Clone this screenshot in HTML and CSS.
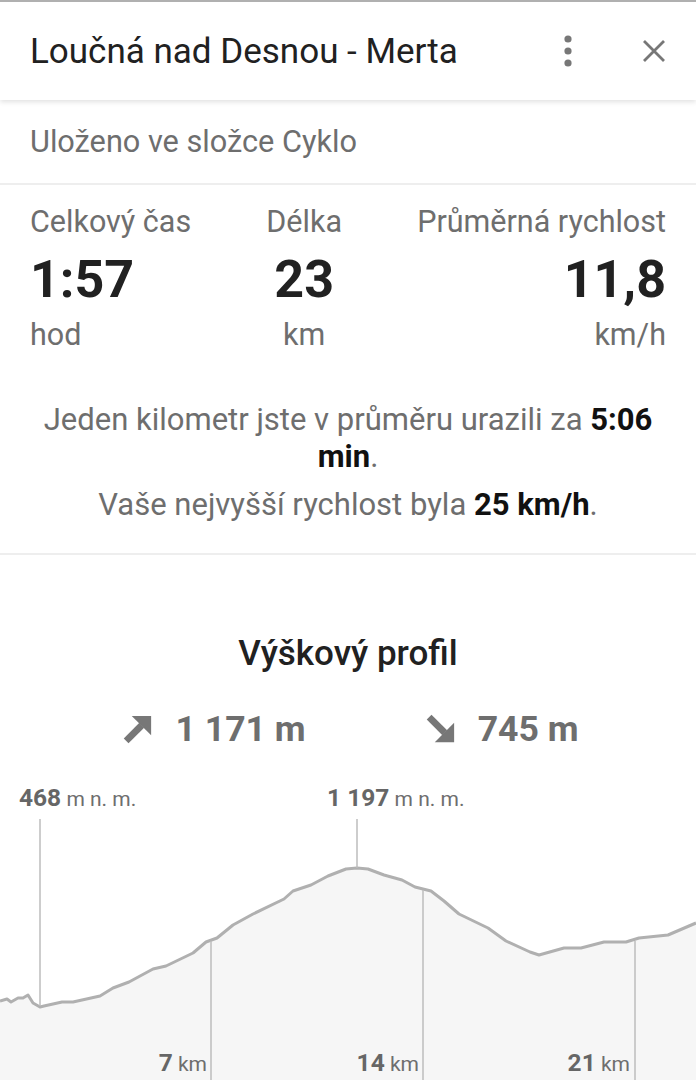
FILE: index.html
```html
<!DOCTYPE html>
<html lang="cs">
<head>
    <meta charset="UTF-8">
    <meta name="viewport" content="width=device-width, initial-scale=1.0">
    <title>Loučná nad Desnou - Merta</title>
    <link rel="stylesheet" href="styles.css">
</head>
<body>

    <!-- horní lišta s názvem trasy -->
    <header class="topbar">
        <h1 class="route-title">Loučná nad Desnou - Merta</h1>
        <div class="topbar-actions">
            <svg class="icon-more" width="14" height="34" viewBox="0 0 14 34">
                <circle cx="7" cy="5" r="3.6"/>
                <circle cx="7" cy="17" r="3.6"/>
                <circle cx="7" cy="29" r="3.6"/>
            </svg>
            <svg class="icon-close" width="26" height="26" viewBox="0 0 26 26">
                <path d="M3 3 L23 23 M23 3 L3 23"/>
            </svg>
        </div>
    </header>

    <div class="folder-row">Uloženo ve složce Cyklo</div>

    <!-- souhrn jízdy -->
    <section class="stats">
        <div class="stat stat-left">
            <div class="stat-label">Celkový čas</div>
            <div class="stat-value">1:57</div>
            <div class="stat-unit">hod</div>
        </div>
        <div class="stat stat-center">
            <div class="stat-label">Délka</div>
            <div class="stat-value">23</div>
            <div class="stat-unit">km</div>
        </div>
        <div class="stat stat-right">
            <div class="stat-label">Průměrná rychlost</div>
            <div class="stat-value">11,8</div>
            <div class="stat-unit">km/h</div>
        </div>
    </section>

    <section class="summary">
        <p class="summary-line">Jeden kilometr jste v průměru urazili za <b>5:06 min</b>.</p>
        <p class="summary-line">Vaše nejvyšší rychlost byla <b>25 km/h</b>.</p>
    </section>

    <!-- výškový profil -->
    <section class="profile">
        <h2 class="profile-title">Výškový profil</h2>
        <div class="climb">
            <div class="climb-item">
                <svg class="climb-icon" width="30" height="30" viewBox="0 0 24 24">
                    <polygon points="7,1.5 22.5,1.5 22.5,17"/>
                    <path d="M2.5 21.5 L15 9"/>
                </svg>
                <span>1 171 m</span>
            </div>
            <div class="climb-item">
                <svg class="climb-icon" width="30" height="30" viewBox="0 0 24 24">
                    <polygon points="7,22.5 22.5,22.5 22.5,7"/>
                    <path d="M2.5 2.5 L15 15"/>
                </svg>
                <span>745 m</span>
            </div>
        </div>

        <div class="chart">
            <svg class="chart-svg" width="696" height="320" viewBox="0 0 696 320">
                <!-- y v grafu = y na stránce - 770 -->
                <polygon class="chart-fill" points="0,230 7,228 11,231 18,227 23,227 28,224 33,232 40,236 44,235 62,231 73,231 100,225 113,217 129,211 153,198 166,195 193,182 206,171 217,167 233,154 253,143 284,128 293,120 311,114 328,105 346,98 357,97 368,98 384,104 402,109 415,116 431,120 444,130 459,143 488,157 506,170 530,181 539,184 564,177 581,177 604,171 626,171 639,167 668,164 696,152 696,320 0,320"/>
                <polyline class="chart-line" points="0,230 7,228 11,231 18,227 23,227 28,224 33,232 40,236 44,235 62,231 73,231 100,225 113,217 129,211 153,198 166,195 193,182 206,171 217,167 233,154 253,143 284,128 293,120 311,114 328,105 346,98 357,97 368,98 384,104 402,109 415,116 431,120 444,130 459,143 488,157 506,170 530,181 539,184 564,177 581,177 604,171 626,171 639,167 668,164 696,152"/>
                <line class="chart-mark" x1="40" y1="48" x2="40" y2="235"/>
                <line class="chart-mark" x1="357" y1="48" x2="357" y2="97"/>
                <line class="chart-mark" x1="211" y1="170" x2="211" y2="320"/>
                <line class="chart-mark" x1="423" y1="119" x2="423" y2="320"/>
                <line class="chart-mark" x1="635" y1="170" x2="635" y2="320"/>
            </svg>
            <div class="chart-label alt-label" style="left: 19px;"><b>468</b> m n. m.</div>
            <div class="chart-label alt-label" style="left: 327px;"><b>1 197</b> m n. m.</div>
            <div class="chart-label km-label" style="right: 489px;"><b>7</b> km</div>
            <div class="chart-label km-label" style="right: 277px;"><b>14</b> km</div>
            <div class="chart-label km-label" style="right: 66px;"><b>21</b> km</div>
        </div>
    </section>

</body>
</html>
```

FILE: styles.css
```css
body {
    margin: 0;
    font-family: Roboto, "Noto Sans", sans-serif;
    background: #fff;
    color: #212121;
    border-top: 2px solid #b0b0b0;
    overflow: hidden;
}
.topbar {
    position: relative;
    height: 98px;
    display: flex;
    align-items: center;
    justify-content: space-between;
    padding: 0 30px;
    box-shadow: 0 2px 5px rgba(0, 0, 0, 0.12);
}
.route-title {
    margin: 0;
    font-size: 35px;
    font-weight: 400;
    color: #212121;
}
.topbar-actions {
    display: flex;
    align-items: center;
    gap: 66px;
}
.icon-more {
    fill: #777;
}
.icon-close {
    stroke: #777;
    stroke-width: 2.8;
    fill: none;
    margin-right: -1px;
}
.folder-row {
    height: 83px;
    display: flex;
    align-items: center;
    padding: 0 30px;
    font-size: 30.7px;
    color: #6e6e6e;
    border-bottom: 2px solid #eee;
}
.stats {
    display: flex;
    justify-content: space-between;
    padding: 17px 30px 0;
}
.stat-label,
.stat-unit {
    font-size: 30.5px;
    color: #6e6e6e;
    line-height: 40px;
}
.stat-value {
    font-size: 52px;
    font-weight: 700;
    line-height: 60px;
    color: #212121;
    margin-top: 8px;
}
.stat-unit {
    line-height: 50px;
}
.stat-center {
    text-align: center;
}
.stat-right {
    text-align: right;
}
.summary {
    padding: 41px 30px 19px;
    text-align: center;
    border-bottom: 2px solid #eee;
}
.summary-line {
    margin: 0 0 11px;
    font-size: 31px;
    line-height: 37px;
    color: #6e6e6e;
}
.summary-line b {
    color: #111;
    font-weight: 700;
}
.profile-title {
    margin: 74px 0 0;
    text-align: center;
    font-size: 35px;
    font-weight: 500;
    line-height: 50px;
    color: #212121;
}
.climb {
    display: flex;
    justify-content: center;
    gap: 120px;
    margin-top: 25px;
    padding-left: 6px;
}
.climb-item {
    display: flex;
    align-items: center;
    gap: 22px;
    font-size: 35.6px;
    font-weight: 700;
    color: #6e6e6e;
    line-height: 50px;
}
.climb-icon polygon {
    fill: #777;
}
.climb-icon path {
    stroke: #777;
    stroke-width: 5.4;
}
.chart {
    position: relative;
    height: 320px;
    margin-top: 17px;
}
.chart-svg {
    display: block;
}
.chart-fill {
    fill: #f6f6f6;
}
.chart-line {
    fill: none;
    stroke: #b0b0b0;
    stroke-width: 3;
    stroke-linejoin: round;
}
.chart-mark {
    stroke: #bdbdbd;
    stroke-width: 1.5;
}
.chart-label {
    position: absolute;
    font-size: 21px;
    color: #6e6e6e;
    white-space: nowrap;
    line-height: 26px;
}
.chart-label b {
    font-size: 24.5px;
    font-weight: 700;
    color: #666;
}
.alt-label {
    top: 14px;
}
.km-label {
    top: 279px;
}
```
